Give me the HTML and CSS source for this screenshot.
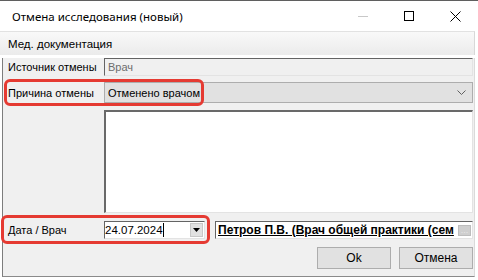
FILE: index.html
```html
<!DOCTYPE html>
<html lang="ru">
<head>
<meta charset="utf-8">
<title>Отмена исследования (новый)</title>
<link rel="stylesheet" href="styles.css">
</head>
<body>
<div class="window">
  <div class="titlebar">
    <span class="title">Отмена исследования (новый)</span>
    <div class="controls">
      <span class="ctl ctl-min"><svg width="10" height="10" viewBox="0 0 10 10"><line x1="0" y1="5.5" x2="10" y2="5.5" stroke="#c8c8c8" stroke-width="1"/></svg></span>
      <span class="ctl"><svg width="10" height="10" viewBox="0 0 10 10"><rect x="0.5" y="0.5" width="9" height="9" fill="none" stroke="#000" stroke-width="1"/></svg></span>
      <span class="ctl"><svg width="11" height="11" viewBox="0 0 11 11"><path d="M0.5 0.5 L10.5 10.5 M10.5 0.5 L0.5 10.5" stroke="#000" stroke-width="1"/></svg></span>
    </div>
  </div>
  <div class="header">Мед. документация</div>
  <div class="panel">
    <div class="row row-source">
      <span class="label">Источник отмены</span>
      <div class="field field-readonly">Врач</div>
    </div>
    <div class="row row-reason">
      <span class="label">Причина отмены</span>
      <div class="combo">
        <span>Отменено врачом</span>
        <svg class="chevron" width="9" height="5" viewBox="0 0 9 5"><path d="M0.5 0.5 L4.5 4.5 L8.5 0.5" fill="none" stroke="#606060" stroke-width="1"/></svg>
      </div>
      <div class="mark mark-reason"></div>
    </div>
    <div class="row row-memo">
      <span class="label"></span>
      <div class="memo"></div>
    </div>
    <div class="row row-date">
      <span class="label">Дата / Врач</span>
      <div class="date">
        <span class="date-text">24.07.2024<span class="caret"></span></span>
        <span class="dd"><svg width="7" height="4" viewBox="0 0 7 4"><path d="M0 0 H7 L3.5 4 Z" fill="#000"/></svg></span>
      </div>
      <div class="doctor">
        <span class="doctor-text">Петров П.В. (Врач общей практики (сем</span>
        <span class="ellipsis">...</span>
      </div>
      <div class="mark mark-date"></div>
    </div>
    <div class="buttons">
      <button class="btn">Ok</button>
      <button class="btn">Отмена</button>
    </div>
  </div>
</div>
</body>
</html>
```
FILE: styles.css
```css
* { box-sizing: border-box; }
html, body { margin: 0; padding: 0; }
body {
  width: 478px;
  height: 280px;
  overflow: hidden;
  background: #ffffff;
  font-family: "Liberation Sans", Arial, sans-serif;
  font-size: 11px;
  color: #000;
}
.window {
  width: 478px;
  height: 280px;
  display: flex;
  flex-direction: column;
  border-top: 1px solid #5f5f5f;
  background: #fff;
}
.titlebar {
  height: 30px;
  display: flex;
  align-items: center;
  background: #fff;
}
.title {
  padding-left: 12px;
  font-family: "Noto Sans", "Open Sans", sans-serif;
  font-size: 11.5px;
  flex: 1;
}
.controls { display: flex; height: 30px; }
.ctl {
  width: 46px;
  height: 30px;
  display: flex;
  align-items: center;
  justify-content: center;
}
.header {
  height: 24px;
  display: flex;
  align-items: center;
  padding-left: 8px;
  margin-right: 3px;
  background: linear-gradient(#f9f9f9, #ebebeb);
  border-top: 1px solid #e2e2e2;
  border-right: 1px solid #d8d8d8;
  font-size: 11.5px;
}
.panel {
  flex: 1;
  margin: 3px 3px 3px 2px;
  background: #f0f0f0;
  border-left: 1px solid #7d7d7d;
  border-right: 1px solid #dadada;
  border-bottom: 1px solid #8a8a8a;
  display: flex;
  flex-direction: column;
  padding: 0 1px 0 0;
}
.row {
  display: flex;
  align-items: center;
  position: relative;
}
.label {
  width: 101px;
  flex: none;
  padding-left: 5px;
  white-space: nowrap;
}
.row-source { height: 18px; }
.field {
  flex: 1;
  height: 18px;
  display: flex;
  align-items: center;
  padding-left: 3px;
}
.field-readonly {
  background: #f0f0f0;
  color: #6d6d6d;
  border-top: 1px solid #646464;
  border-left: 1px solid #646464;
  border-right: 1px solid #e3e3e3;
  border-bottom: 1px solid #e3e3e3;
}
.row-reason { height: 21px; margin-top: 6px; }
.combo {
  flex: 1;
  height: 21px;
  background: #e1e1e1;
  border: 1px solid #adadad;
  display: flex;
  align-items: center;
  justify-content: space-between;
  padding: 0 6px 0 3px;
}
.row-memo { margin-top: 7px; height: 103px; align-items: stretch; }
.memo {
  flex: 1;
  background: #fff;
  border-top: 2px solid #696969;
  border-left: 2px solid #696969;
  border-right: 1px solid #e3e3e3;
  border-bottom: 1px solid #e3e3e3;
}
.row-date { margin-top: 8px; height: 18px; }
.date {
  width: 101px;
  flex: none;
  height: 18px;
  background: #fff;
  border-top: 1px solid #646464;
  border-left: 1px solid #646464;
  border-right: 1px solid #e3e3e3;
  border-bottom: 1px solid #e3e3e3;
  display: flex;
  align-items: center;
  justify-content: space-between;
  padding: 0 1px 0 0;
  font-size: 11.5px;
}
.date-text { display: flex; align-items: center; }
.caret {
  display: inline-block;
  width: 1px;
  height: 14px;
  background: #000;
}
.dd {
  width: 13px;
  height: 14px;
  background: #e1e1e1;
  border: 1px solid #c8c8c8;
  display: flex;
  align-items: center;
  justify-content: center;
}
.doctor {
  flex: 1;
  margin-left: 10px;
  height: 18px;
  background: #fff;
  border-top: 1px solid #646464;
  border-left: 1px solid #646464;
  border-right: 1px solid #e3e3e3;
  border-bottom: 1px solid #e3e3e3;
  display: flex;
  align-items: center;
  padding-left: 2px;
  overflow: hidden;
}
.doctor-text {
  flex: 1;
  white-space: nowrap;
  overflow: hidden;
  font-weight: bold;
  font-size: 12px;
  text-decoration: underline;
}
.ellipsis {
  flex: none;
  width: 13px;
  height: 11px;
  margin: 0 1px;
  background: #cfcfcf;
  color: #e8e8e8;
  font-size: 9px;
  line-height: 8px;
  text-align: center;
  border: 1px solid #bdbdbd;
}
.mark {
  position: absolute;
  border: 3px solid #e53a32;
  border-radius: 6px;
  pointer-events: none;
}
.mark-reason { left: 1px; top: -3px; width: 200px; height: 27px; }
.mark-date { left: -2px; top: -6px; width: 209px; height: 29px; }
.buttons {
  display: flex;
  justify-content: flex-end;
  gap: 8px;
  margin-top: 8px;
}
.btn {
  width: 74px;
  height: 22px;
  background: #e1e1e1;
  border: 1px solid #adadad;
  font-family: "Liberation Sans", Arial, sans-serif;
  font-size: 12px;
  color: #000;
  padding: 0;
}
```
